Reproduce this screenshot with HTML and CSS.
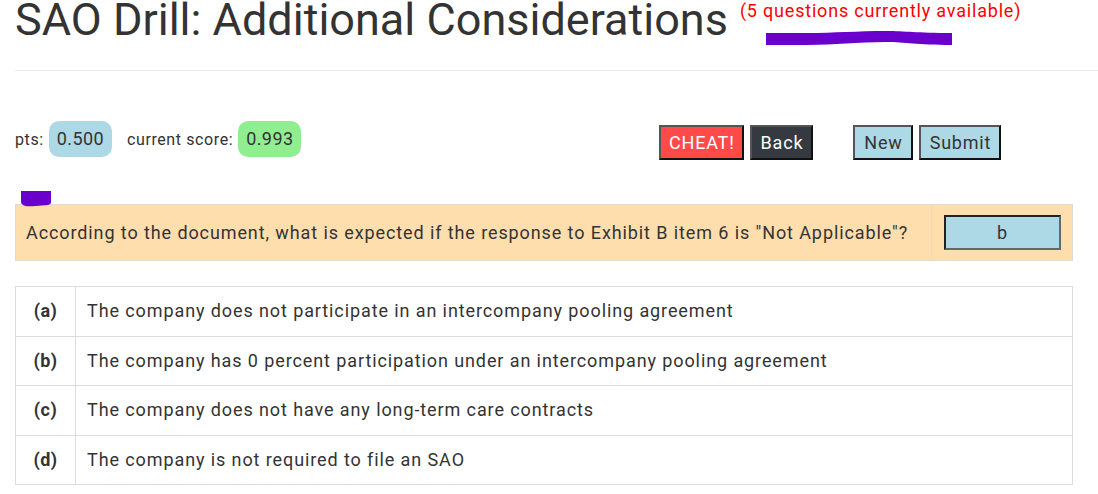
FILE: index.html
```html
<!DOCTYPE html>
<html>
<head>
<meta charset="utf-8">
<link rel="stylesheet" href="styles.css">
</head>
<body>
<div class="page">
  <header class="head">
    <h1 class="title">SAO Drill: Additional Considerations</h1>
    <span class="avail">(5 questions currently available)</span>
  </header>
  <hr class="rule">
  <div class="toolbar">
    <div class="scores">
      <span class="lbl">pts:</span>
      <span class="badge blue">0.500</span>
      <span class="lbl lbl2">current score:</span>
      <span class="badge green">0.993</span>
    </div>
    <div class="btns">
      <button class="btn red">CHEAT!</button>
      <button class="btn dark">Back</button>
      <button class="btn light gapped">New</button>
      <button class="btn light">Submit</button>
    </div>
  </div>
  <table class="qbox">
    <tr>
      <td class="qtext">According to the document, what is expected if the response to Exhibit B item 6 is "Not Applicable"?</td>
      <td class="qans"><div class="ansbox">b</div></td>
    </tr>
  </table>
  <table class="opts">
    <tr><td class="key">(a)</td><td>The company does not participate in an intercompany pooling agreement</td></tr>
    <tr><td class="key">(b)</td><td>The company has 0 percent participation under an intercompany pooling agreement</td></tr>
    <tr><td class="key">(c)</td><td>The company does not have any long-term care contracts</td></tr>
    <tr><td class="key">(d)</td><td>The company is not required to file an SAO</td></tr>
  </table>
</div>
<svg class="mark mark1" width="186" height="15" viewBox="0 0 186 15">
  <path d="M0 2 L40 2 C70 2 90 0 120 0 C140 0 150 2 186 2 L186 14 C150 14 140 11 120 11 C90 11 70 14 40 14 L0 14 Z" fill="#6a00cc"/>
</svg>
<svg class="mark mark2" width="32" height="17" viewBox="0 0 32 17">
  <path d="M1 1 L31 1 L31 12 C31 15 28 15 22 15.5 C14 16 6 17 3 15 C1 14 1 12 1 10 Z" fill="#6a00cc"/>
</svg>
</body>
</html>
```
FILE: styles.css
```css
html, body {
  margin: 0;
  padding: 0;
  background: #fff;
}
body {
  font-family: Roboto, "Liberation Sans", Arial, sans-serif;
  color: #333;
}
.page {
  padding: 0 25px 0 15px;
}
.head {
  display: flex;
  align-items: flex-start;
}
.title {
  margin: 0;
  font-size: 45px;
  font-weight: 400;
  line-height: 40px;
  color: #333;
  white-space: nowrap;
}
.avail {
  margin-left: 12px;
  font-size: 18px;
  line-height: 22px;
  letter-spacing: 0.8px;
  color: #ff0000;
  white-space: nowrap;
}
.rule {
  margin: 30px -25px 0 0;
  border: 0;
  border-top: 1px solid #eaeaea;
  height: 0;
}
.toolbar {
  display: flex;
  align-items: center;
  margin-top: 50px;
  height: 36px;
}
.scores {
  flex: 0 0 644px;
  display: flex;
  align-items: center;
}
.lbl {
  font-size: 16px;
  letter-spacing: 0.6px;
  color: #333;
}
.lbl2 {
  margin-left: 15px;
}
.badge {
  margin-left: 5px;
  font-size: 18px;
  line-height: 22px;
  letter-spacing: 0.4px;
  padding: 7px 8px;
  border-radius: 10px;
  color: #333;
}
.blue { background: #add8e6; }
.green { background: #90ee90; }
.btns {
  display: flex;
  align-items: center;
  margin-top: 7px;
}
.btn {
  font-family: Roboto, "Liberation Sans", Arial, sans-serif;
  font-size: 18px;
  line-height: 21px;
  letter-spacing: 0.8px;
  height: 35px;
  padding: 5px 8px 5px 9px;
  margin: 0 6px 0 0;
  border: 2px solid;
  border-color: #555 #111 #111 #555;
  border-radius: 0;
  box-sizing: border-box;
}
.red { background: #ff4a4a; color: #fff; padding: 5px 7px 5px 8px; }
.dark { background: #343a40; color: #fff; }
.light { background: #add8e6; color: #333; }
.gapped { margin-left: 34px; }
.qbox {
  margin-top: 47px;
  width: 1058px;
  border-collapse: collapse;
  background: #ffdeae;
}
.qbox td {
  border: 1px solid #e0dcd4;
  font-size: 18px;
  line-height: 21px;
  letter-spacing: 0.9px;
}
.qtext {
  padding: 0 10px;
}
.qans {
  width: 117px;
  padding: 10px 11px 10px 12px;
}
.ansbox {
  height: 35px;
  box-sizing: border-box;
  background: #add8e6;
  border: 2px solid;
  border-color: #222 #666 #666 #222;
  text-align: center;
  line-height: 31px;
  font-size: 18px;
}
.opts {
  margin-top: 25px;
  width: 1058px;
  border-collapse: collapse;
}
.opts td {
  border: 1px solid #ddd;
  padding: 14px 11px;
  font-size: 18px;
  line-height: 20.5px;
  letter-spacing: 0.9px;
}
.opts .key {
  width: 37px;
  text-align: center;
  font-weight: 700;
  letter-spacing: 0.5px;
}
.mark {
  position: absolute;
}
.mark1 {
  left: 766px;
  top: 31px;
}
.mark2 {
  left: 20px;
  top: 190px;
}
```
